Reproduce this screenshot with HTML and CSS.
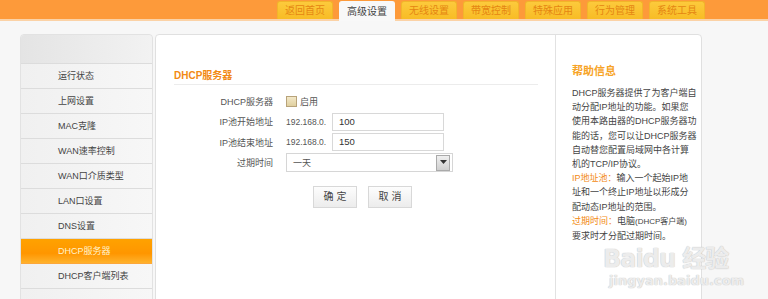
FILE: index.html
```html
<!DOCTYPE html>
<html lang="zh-CN">
<head>
    <meta charset="UTF-8">
    <title>DHCP服务器</title>
    <link rel="stylesheet" href="styles.css">
</head>
<body>
    <div class="topbar">
        <div class="tab">返回首页</div>
        <div class="tab active">高级设置</div>
        <div class="tab">无线设置</div>
        <div class="tab">带宽控制</div>
        <div class="tab">特殊应用</div>
        <div class="tab">行为管理</div>
        <div class="tab">系统工具</div>
    </div>

    <div class="layout">
        <div class="sidebar">
            <div class="side-head"></div>
            <div class="side-item">运行状态</div>
            <div class="side-item">上网设置</div>
            <div class="side-item">MAC克隆</div>
            <div class="side-item">WAN速率控制</div>
            <div class="side-item">WAN口介质类型</div>
            <div class="side-item">LAN口设置</div>
            <div class="side-item">DNS设置</div>
            <div class="side-item active">DHCP服务器</div>
            <div class="side-item">DHCP客户端列表</div>
            <div class="side-item"></div>
        </div>

        <div class="content">
            <div class="main">
                <div class="section-title">DHCP服务器</div>
                <div class="form">
                    <div class="row">
                        <div class="label">DHCP服务器</div>
                        <div class="value"><span class="checkbox"></span>启用</div>
                    </div>
                    <div class="row">
                        <div class="label">IP池开始地址</div>
                        <div class="value"><span class="prefix">192.168.0.</span><span class="input">100</span></div>
                    </div>
                    <div class="row">
                        <div class="label">IP池结束地址</div>
                        <div class="value"><span class="prefix">192.168.0.</span><span class="input">150</span></div>
                    </div>
                    <div class="row">
                        <div class="label">过期时间</div>
                        <div class="value">
                            <div class="select">
                                <span>一天</span>
                                <span class="arrow"><svg width="7" height="5" viewBox="0 0 7 5"><path d="M0 0h7L3.5 4z" fill="#333"/></svg></span>
                            </div>
                        </div>
                    </div>
                </div>
                <div class="buttons">
                    <div class="btn">确 定</div>
                    <div class="btn">取 消</div>
                </div>
            </div>

            <div class="help">
                <div class="help-title">帮助信息</div>
                <p>DHCP服务器提供了为客户端自<br>动分配IP地址的功能。如果您<br>使用本路由器的DHCP服务器功<br>能的话，您可以让DHCP服务器<br>自动替您配置局域网中各计算<br>机的TCP/IP协议。</p>
                <p><span class="hl">IP地址池：</span>输入一个起始IP地<br>址和一个终止IP地址以形成分<br>配动态IP地址的范围。</p>
                <p><span class="hl">过期时间：</span>电脑<span class="small">(DHCP客户端)</span><br>要求时才分配过期时间。</p>
            </div>
        </div>
    </div>

    <div class="watermark">
        <div class="wm-big">Baidu 经验</div>
        <div class="wm-small">jingyan.baidu.com</div>
    </div>
</body>
</html>
```

FILE: styles.css
```css
body {
    margin: 0;
    background-color: #f7f7f7;
    font-family: "Liberation Sans", "Noto Sans CJK SC", sans-serif;
    color: #333;
    font-size: 9px;
    height: 299px;
    overflow: hidden;
    position: relative;
}

/* top bar */
.topbar {
    height: 19px;
    background-color: #fd9a3a;
    border-bottom: 2px solid #fbd2a6;
    display: flex;
    align-items: flex-end;
    padding-left: 277px;
    gap: 6px;
}

.tab {
    width: 54px;
    height: 17px;
    line-height: 17px;
    text-align: center;
    background: linear-gradient(#fcca3c, #f8bc25);
    border: 1px solid #f2b52a;
    border-bottom: none;
    border-radius: 3px 3px 0 0;
    color: #e58512;
    font-size: 10px;
}

.tab.active {
    height: 19px;
    margin-bottom: -2px;
    background: #f8f8f8;
    border-color: #f8f8f8;
    color: #444;
    line-height: 20px;
}

/* layout */
.layout {
    display: flex;
    padding: 13px 0 0 20px;
    gap: 2px;
}

.sidebar {
    width: 131px;
    height: 300px;
    background-color: #f1f1f1;
    border: 1px solid #e2e2e2;
    border-radius: 4px 4px 0 0;
}

.side-head {
    height: 28px;
    background: linear-gradient(to right, #e4e4e4, #f2f2f2);
    border-bottom: 1px solid #dcdcdc;
    border-radius: 4px 4px 0 0;
}

.side-item {
    height: 24px;
    line-height: 24px;
    border-bottom: 1px solid #dcdcdc;
    padding-left: 37px;
    color: #444;
    background: linear-gradient(to right, #f0f0f0, #f7f7f7);
}

.side-item.active {
    background: linear-gradient(#ffa200, #ff9600 60%, #ffb22c);
    color: #fff3cc;
    border-bottom-color: #fca73a;
}

.content {
    display: flex;
    width: 545px;
    height: 300px;
    background: #fff;
    border: 1px solid #e0e0e0;
    border-radius: 4px 4px 0 0;
}

/* main form */
.main {
    box-sizing: border-box;
    width: 400px;
    padding: 34px 17px 0 18px;
    border-right: 1px solid #e2e2e2;
}

.section-title {
    color: #f28a14;
    font-weight: bold;
    font-size: 10px;
    height: 13px;
    line-height: 13px;
    padding-bottom: 2px;
    border-bottom: 1px solid #ececec;
}

.form {
    margin-top: 6px;
}

.row {
    display: flex;
    align-items: center;
    height: 20.5px;
}

.label {
    width: 99px;
    text-align: right;
    padding-right: 13px;
    color: #555;
}

.value {
    display: flex;
    align-items: center;
    color: #555;
}

.checkbox {
    width: 9px;
    height: 9px;
    border: 1px solid #b8a37a;
    background: linear-gradient(#f3e8c8, #e0d0a0);
    margin-right: 3px;
}

.prefix {
    width: 46px;
    font-size: 8.5px;
    color: #555;
}

.input {
    width: 104px;
    height: 16px;
    line-height: 16px;
    border: 1px solid #d8d8d8;
    padding-left: 6px;
    color: #333;
    font-size: 9.5px;
}

.select {
    box-sizing: border-box;
    width: 167px;
    height: 19px;
    border: 1px solid #d6d6d6;
    display: flex;
    justify-content: space-between;
    align-items: center;
    padding-left: 6px;
}

.arrow {
    width: 12px;
    height: 14px;
    margin-right: 2px;
    border: 1px solid #aaa;
    background: linear-gradient(#f0f0f0, #cfcfcf);
    display: flex;
    justify-content: center;
    align-items: center;
}

.buttons {
    display: flex;
    gap: 11px;
    margin: 13px 0 0 139px;
}

.btn {
    width: 42px;
    height: 20px;
    line-height: 20px;
    text-align: center;
    border: 1px solid #d8d8d8;
    background: linear-gradient(#fdfdfd, #ececec);
    font-size: 10px;
    color: #444;
}

/* help */
.help {
    flex: 1;
    padding: 27px 0 0 16px;
}

.help-title {
    color: #f7a427;
    font-weight: bold;
    font-size: 11px;
    height: 14px;
    margin-bottom: 10px;
}

.help p {
    margin: 0;
    font-size: 9px;
    line-height: 14.2px;
    color: #444;
    white-space: nowrap;
}

.hl {
    color: #f28a14;
}

.small {
    font-size: 8px;
}

/* watermark overlay */
.watermark {
    position: absolute;
    left: 603px;
    top: 246px;
    color: rgba(255, 255, 255, 0.7);
    text-shadow: 0 0 1px #c4c4c4, 0 0 1px #c4c4c4;
    font-family: "DejaVu Sans", "Noto Sans CJK SC", sans-serif;
}

.wm-big {
    font-size: 24px;
    font-weight: bold;
    line-height: 27px;
    letter-spacing: -1px;
}

.wm-small {
    font-size: 13px;
    font-weight: bold;
    line-height: 16px;
    margin-left: 6px;
}
```
